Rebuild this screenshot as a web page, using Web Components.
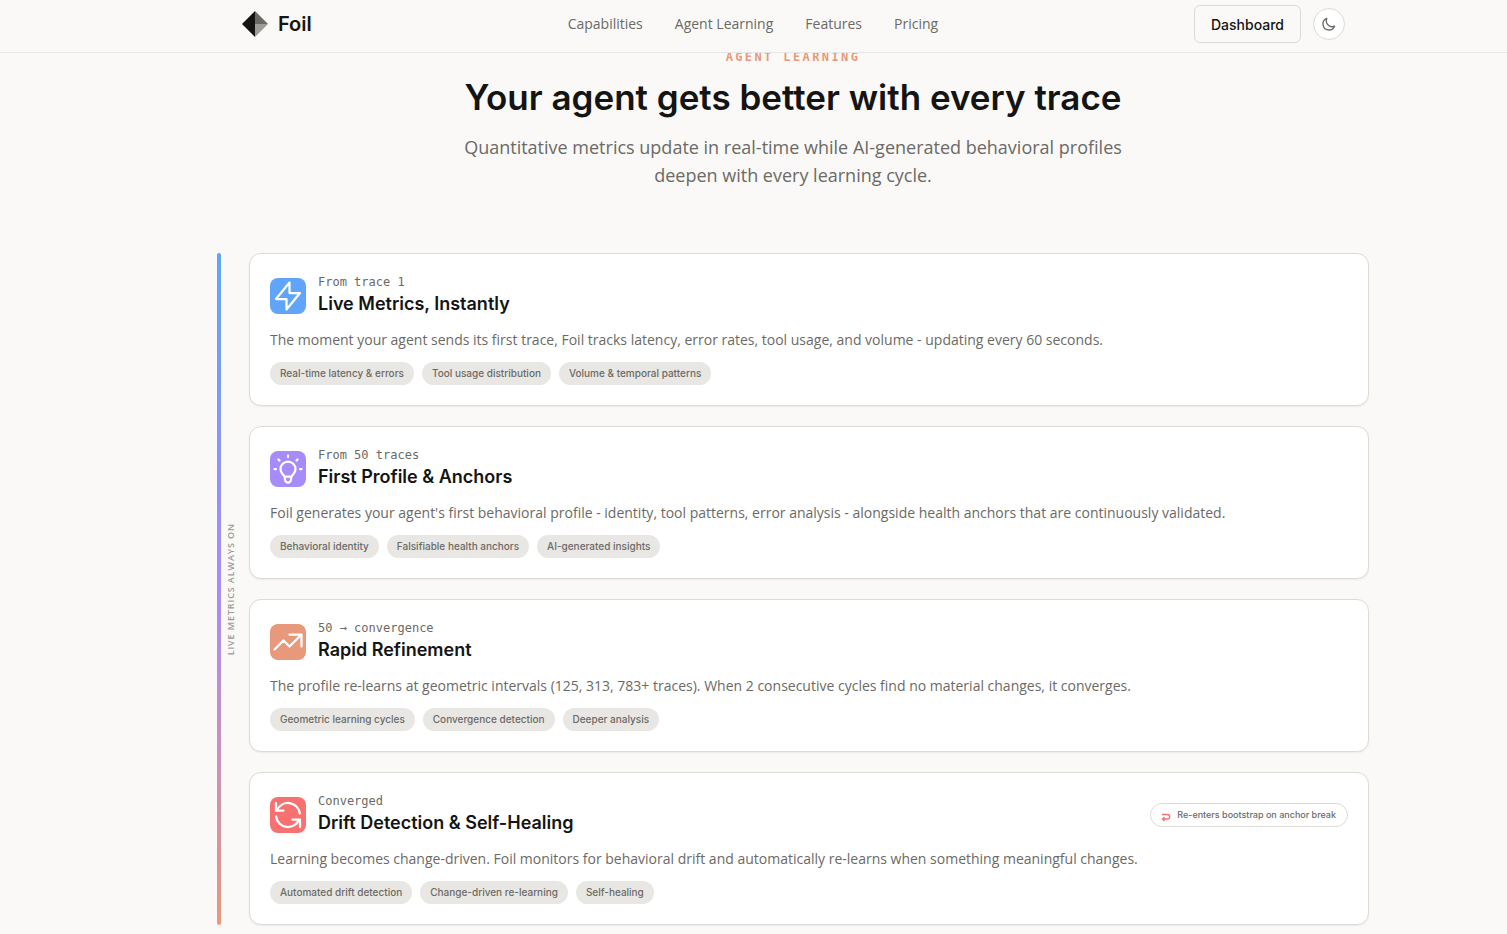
<!DOCTYPE html>
<html lang="en">
<head>
<meta charset="utf-8">
<meta name="viewport" content="width=device-width, initial-scale=1">
<title>Foil</title>
<style>
  :root {
    --bg: #faf9f7;
    --surface: #ffffff;
    --ink: #141414;
    --muted: #6b6a66;
    --faint: #9c9b96;
    --line: #dcdbd7;
    --chip: #e8e7e3;
    --accent: #e8997b;
    --inset: 79px;
    --display: Inter, "Liberation Sans", sans-serif;
    --body: "Open Sans", "Liberation Sans", sans-serif;
    --mono: "DejaVu Sans Mono", "Liberation Mono", monospace;
  }
  body {
    margin: 0;
    background: var(--bg);
    color: var(--ink);
    font-family: var(--display);
  }
</style>
</head>
<body>

<foil-page>
  <foil-header slot="header">
    <a href="#capabilities">Capabilities</a>
    <a href="#learning">Agent Learning</a>
    <a href="#features">Features</a>
    <a href="#pricing">Pricing</a>
  </foil-header>

  <section-intro>
    <span slot="eyebrow">AGENT LEARNING</span>
    <span slot="title">Your agent gets better with every trace</span>
    Quantitative metrics update in real-time while AI-generated behavioral profiles deepen with every learning cycle.
  </section-intro>

  <learning-timeline label="LIVE METRICS ALWAYS ON">
    <stage-card icon="bolt" color="#60a5fa">
      <span slot="when">From trace 1</span>
      <span slot="title">Live Metrics, Instantly</span>
      The moment your agent sends its first trace, Foil tracks latency, error rates, tool usage, and volume - updating every 60 seconds.
      <tag-chip slot="tags">Real-time latency &amp; errors</tag-chip>
      <tag-chip slot="tags">Tool usage distribution</tag-chip>
      <tag-chip slot="tags">Volume &amp; temporal patterns</tag-chip>
    </stage-card>

    <stage-card icon="bulb" color="#a78bfa">
      <span slot="when">From 50 traces</span>
      <span slot="title">First Profile &amp; Anchors</span>
      Foil generates your agent's first behavioral profile - identity, tool patterns, error analysis - alongside health anchors that are continuously validated.
      <tag-chip slot="tags">Behavioral identity</tag-chip>
      <tag-chip slot="tags">Falsifiable health anchors</tag-chip>
      <tag-chip slot="tags">AI-generated insights</tag-chip>
    </stage-card>

    <stage-card icon="trend" color="#e8997b">
      <span slot="when">50 → convergence</span>
      <span slot="title">Rapid Refinement</span>
      The profile re-learns at geometric intervals (125, 313, 783+ traces). When 2 consecutive cycles find no material changes, it converges.
      <tag-chip slot="tags">Geometric learning cycles</tag-chip>
      <tag-chip slot="tags">Convergence detection</tag-chip>
      <tag-chip slot="tags">Deeper analysis</tag-chip>
    </stage-card>

    <stage-card icon="refresh" color="#f87171">
      <span slot="when">Converged</span>
      <span slot="title">Drift Detection &amp; Self-Healing</span>
      <loop-note slot="note">Re-enters bootstrap on anchor break</loop-note>
      Learning becomes change-driven. Foil monitors for behavioral drift and automatically re-learns when something meaningful changes.
      <tag-chip slot="tags">Automated drift detection</tag-chip>
      <tag-chip slot="tags">Change-driven re-learning</tag-chip>
      <tag-chip slot="tags">Self-healing</tag-chip>
    </stage-card>
  </learning-timeline>
</foil-page>

<script>
const ICONS = {
  bolt: "M13 10V3L4 14h7v7l9-11h-7z",
  bulb: "M9.663 17h4.673M12 3v1m6.364 1.636l-.707.707M21 12h-1M4 12H3m3.343-5.657l-.707-.707m2.828 9.9a5 5 0 117.072 0l-.548.547A3.374 3.374 0 0014 18.469V19a2 2 0 11-4 0v-.531c0-.895-.356-1.754-.988-2.386l-.548-.547z",
  trend: "M13 7h8m0 0v8m0-8l-8 8-4-4-6 6",
  refresh: "M4 4v5h.582m15.356 2A8.001 8.001 0 004.582 9m0 0H9m11 11v-5h-.581m0 0a8.003 8.003 0 01-15.357-2m15.357 2H15",
  moon: "M20.354 15.354A9 9 0 018.646 3.646 9.003 9.003 0 0012 21a9.003 9.003 0 008.354-5.646z",
};

// attach an open root and fill it
class FoilElement extends HTMLElement {
  constructor() {
    super();
    this.attachShadow({ mode: "open" });
  }

  connectedCallback() {
    this.shadowRoot.innerHTML = this.render();
  }
}

class FoilPage extends FoilElement {
  render() {
    return `
      <style>
        :host {
          display: block;
          padding: 49px 0 9px var(--inset);
        }
        main {
          max-width: 1152px;
          margin: 0 auto;
        }
      </style>
      <slot name="header"></slot>
      <main><slot></slot></main>
    `;
  }
}

class FoilHeader extends FoilElement {
  render() {
    return `
      <style>
        :host {
          position: fixed;
          top: 0;
          left: 0;
          right: 0;
          z-index: 10;
          display: block;
          padding-left: var(--inset);
          background: var(--bg);
          border-bottom: 1px solid #e8e7e3;
        }
        .bar {
          box-sizing: border-box;
          display: flex;
          align-items: center;
          justify-content: space-between;
          max-width: 1152px;
          margin: 0 auto;
          padding: 5px 24px 9px;
        }
        .logo {
          display: flex;
          align-items: center;
          gap: 9px;
          color: var(--ink);
          font-size: 20px;
          line-height: 28px;
          font-weight: 600;
          text-decoration: none;
        }
        nav {
          display: flex;
          gap: 32px;
        }
        ::slotted(a) {
          color: var(--muted);
          font-family: var(--body);
          font-size: 14px;
          line-height: 20px;
          text-decoration: none;
        }
        .actions {
          display: flex;
          align-items: center;
          gap: 12px;
        }
        button {
          box-sizing: border-box;
          border: 1px solid var(--line);
          font-family: inherit;
          cursor: pointer;
        }
        .dash {
          height: 38px;
          padding: 0 16px;
          border-radius: 6px;
          background: transparent;
          color: var(--ink);
          font-size: 14px;
          font-weight: 500;
        }
        .theme {
          display: flex;
          align-items: center;
          justify-content: center;
          width: 32px;
          height: 32px;
          padding: 0;
          border-radius: 50%;
          background: var(--surface);
          color: var(--muted);
        }
      </style>
      <div class="bar">
        <a class="logo" href="#">
          <svg width="28" height="28" viewBox="0 0 28 28" aria-hidden="true">
            <path d="M14 1L1 14l13 13z" fill="#141414"/>
            <path d="M14 1l13 13H14z" fill="#6b6a63"/>
            <path d="M14 14h13L14 27z" fill="#a09d98"/>
          </svg>
          Foil
        </a>
        <nav><slot></slot></nav>
        <div class="actions">
          <button class="dash" type="button">Dashboard</button>
          <button class="theme" type="button" aria-label="Toggle theme">
            <svg width="16" height="16" viewBox="0 0 24 24" fill="none" stroke="currentColor" stroke-width="2" stroke-linecap="round" stroke-linejoin="round"><path d="${ICONS.moon}"/></svg>
          </button>
        </div>
      </div>
    `;
  }
}

class SectionIntro extends FoilElement {
  render() {
    return `
      <style>
        :host {
          display: block;
          margin-bottom: 64px;
          text-align: center;
        }
        .eyebrow {
          color: var(--accent);
          font-family: var(--mono);
          font-size: 12px;
          line-height: 16px;
          font-weight: 600;
          letter-spacing: 0.2em;
        }
        h2 {
          margin: 12px 0 16px;
          font-size: 35px;
          line-height: 40px;
          font-weight: 600;
        }
        p {
          max-width: 672px;
          margin: 0 auto;
          color: var(--muted);
          font-family: var(--body);
          font-size: 18px;
          line-height: 28px;
        }
      </style>
      <div class="eyebrow"><slot name="eyebrow"></slot></div>
      <h2><slot name="title"></slot></h2>
      <p><slot></slot></p>
    `;
  }
}

class LearningTimeline extends FoilElement {
  render() {
    return `
      <style>
        :host {
          display: flex;
        }
        .rail {
          flex: none;
          display: flex;
          align-items: center;
          gap: 4px;
          width: 32px;
        }
        .line {
          align-self: stretch;
          width: 4px;
          border-radius: 2px;
          background: linear-gradient(to bottom, #60a5fa, #a78bfa 50%, #e8997b);
        }
        .label {
          writing-mode: vertical-rl;
          transform: rotate(180deg);
          color: var(--faint);
          font-family: var(--body);
          font-size: 9px;
          line-height: 12px;
          font-weight: 600;
          letter-spacing: 0.1em;
          white-space: nowrap;
        }
        .stages {
          flex: 1;
          min-width: 0;
          display: grid;
          gap: 20px;
        }
      </style>
      <div class="rail">
        <div class="line"></div>
        <div class="label">${this.getAttribute("label")}</div>
      </div>
      <div class="stages"><slot></slot></div>
    `;
  }
}

class StageCard extends FoilElement {
  render() {
    return `
      <style>
        :host {
          display: block;
          padding: 20px;
          border: 1px solid var(--line);
          border-radius: 12px;
          background: var(--surface);
          box-shadow: 0 1px 2px rgba(0, 0, 0, 0.06);
        }
        header {
          display: flex;
          align-items: center;
          gap: 12px;
        }
        .icon {
          flex: none;
          width: 36px;
          height: 36px;
          border-radius: 8px;
          background: ${this.getAttribute("color")};
          color: #ffffff;
        }
        .icon svg {
          display: block;
        }
        .titles {
          flex: 1;
        }
        .when {
          color: var(--muted);
          font-family: var(--mono);
          font-size: 12px;
          line-height: 16px;
        }
        h3 {
          margin: 0;
          font-size: 18px;
          line-height: 28px;
          font-weight: 600;
        }
        p {
          margin: 10px 0;
          color: var(--muted);
          font-family: var(--body);
          font-size: 14px;
          line-height: 24px;
        }
        .tags {
          display: flex;
          flex-wrap: wrap;
          gap: 8px;
        }
      </style>
      <header>
        <div class="icon">
          <svg width="36" height="36" viewBox="0 0 24 24" fill="none" stroke="currentColor" stroke-width="1.5" stroke-linecap="round" stroke-linejoin="round" aria-hidden="true"><path d="${ICONS[this.getAttribute("icon")]}"/></svg>
        </div>
        <div class="titles">
          <div class="when"><slot name="when"></slot></div>
          <h3><slot name="title"></slot></h3>
        </div>
        <slot name="note"></slot>
      </header>
      <p><slot></slot></p>
      <div class="tags"><slot name="tags"></slot></div>
    `;
  }
}

class TagChip extends FoilElement {
  render() {
    return `
      <style>
        :host {
          display: block;
          padding: 4px 10px;
          border-radius: 12px;
          background: var(--chip);
          color: var(--muted);
          font-size: 10px;
          line-height: 15px;
          font-weight: 500;
        }
      </style>
      <slot></slot>
    `;
  }
}

class LoopNote extends FoilElement {
  render() {
    return `
      <style>
        :host {
          display: flex;
          align-items: center;
          gap: 6px;
          padding: 4px 11px 4px 10px;
          border: 1px solid var(--line);
          border-radius: 12px;
          color: var(--muted);
          font-size: 9px;
          line-height: 14px;
          font-weight: 500;
        }
        svg {
          margin-top: 3px;
        }
      </style>
      <svg width="10" height="10" viewBox="0 0 10 10" fill="none" stroke="#f87171" aria-hidden="true"><path d="M1 2.5h5.5a2 2 0 010 4.5H1.5M3.5 5l-2 2 2 2" stroke-width="1.3"/></svg>
      <slot></slot>
    `;
  }
}

customElements.define("foil-page", FoilPage);
customElements.define("foil-header", FoilHeader);
customElements.define("section-intro", SectionIntro);
customElements.define("learning-timeline", LearningTimeline);
customElements.define("stage-card", StageCard);
customElements.define("tag-chip", TagChip);
customElements.define("loop-note", LoopNote);
</script>
</body>
</html>
